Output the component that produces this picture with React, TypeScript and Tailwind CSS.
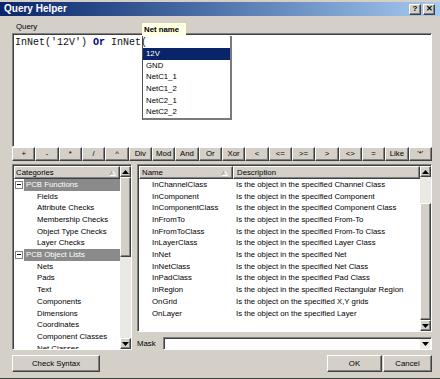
const OPERATORS = ['+', '-', '*', '/', '^', 'Div', 'Mod', 'And', 'Or', 'Xor', '<', '<=', '>=', '>', '<>', '=', 'Like', "'*'"];

const NETS = ['12V', 'GND', 'NetC1_1', 'NetC1_2', 'NetC2_1', 'NetC2_2'];

const CATEGORIES = [
  { label: 'PCB Functions', group: true },
  { label: 'Fields' },
  { label: 'Attribute Checks' },
  { label: 'Membership Checks' },
  { label: 'Object Type Checks' },
  { label: 'Layer Checks' },
  { label: 'PCB Object Lists', group: true },
  { label: 'Nets' },
  { label: 'Pads' },
  { label: 'Text' },
  { label: 'Components' },
  { label: 'Dimensions' },
  { label: 'Coordinates' },
  { label: 'Component Classes' },
  { label: 'Net Classes' },
];

const FUNCTIONS = [
  ['InChannelClass', 'Is the object in the specified Channel Class'],
  ['InComponent', 'Is the object in the specified Component'],
  ['InComponentClass', 'Is the object in the specified Component Class'],
  ['InFromTo', 'Is the object in the specified From-To'],
  ['InFromToClass', 'Is the object in the specified From-To Class'],
  ['InLayerClass', 'Is the object in the specified Layer Class'],
  ['InNet', 'Is the object in the specified Net'],
  ['InNetClass', 'Is the object in the specified Net Class'],
  ['InPadClass', 'Is the object in the specified Pad Class'],
  ['InRegion', 'Is the object in the specified Rectangular Region'],
  ['OnGrid', 'Is the object on the specified X,Y grids'],
  ['OnLayer', 'Is the object on the specified Layer'],
];

const raised =
  'border border-t-white border-l-white border-r-[#404040] border-b-[#404040] shadow-[inset_-1px_-1px_0_#808080]';
const sunken =
  'border border-t-[#808080] border-l-[#808080] border-r-white border-b-white shadow-[inset_1px_1px_0_#404040]';

function Arrow({ down }: { down?: boolean }) {
  return (
    <svg width="7" height="4" viewBox="0 0 7 4">
      <path d={down ? 'M0 0h7L3.5 4z' : 'M0 4h7L3.5 0z'} fill="#000" />
    </svg>
  );
}

function ArrowButton({ down }: { down?: boolean }) {
  return (
    <div className={`flex h-[11px] w-[11px] shrink-0 items-center justify-center bg-[#d4d0c8] ${raised}`}>
      <Arrow down={down} />
    </div>
  );
}

function SortMark() {
  return (
    <svg width="7" height="6" viewBox="0 0 7 6">
      <path d="M0.5 5.5L3.5 0.5" stroke="#9a9a9a" fill="none" />
      <path d="M3.5 0.5L6.5 5.5H0.5" stroke="#ffffff" fill="none" />
    </svg>
  );
}

function ScrollBar({ beforeClass, thumbClass }: { beforeClass: string; thumbClass: string }) {
  return (
    <div className="flex w-[11px] shrink-0 flex-col bg-[#ebe9e4]">
      <ArrowButton />
      <div className={beforeClass} />
      <div className={`bg-[#d4d0c8] ${raised} ${thumbClass}`} />
      <div className="flex-1" />
      <ArrowButton down />
    </div>
  );
}

export default function App() {
  return (
    <div className="flex h-[379px] w-[440px] flex-col overflow-hidden border-b border-b-[#404040] bg-[#d4d0c8] pt-[2px] font-['Liberation_Sans',Arial,sans-serif] text-[7.8px] leading-none text-black">
      {/* title bar */}
      <div className="flex h-[14px] shrink-0 items-center bg-linear-to-r from-[#0a246a] to-[#a6caf0] pl-[4px] pr-[5px]">
        <span className="text-[10px] font-bold text-white">Query Helper</span>
        <div className="flex-1" />
        <div className={`mr-[2px] flex h-[11px] w-[12px] items-center justify-center bg-[#d4d0c8] text-[8px] font-bold ${raised}`}>
          ?
        </div>
        <div className={`flex h-[11px] w-[12px] items-center justify-center bg-[#d4d0c8] text-[8px] font-bold ${raised}`}>
          ✕
        </div>
      </div>

      <div className="flex flex-1 flex-col pl-[12px] pr-[8px]">
        <div className="h-[17px] pl-[4px] pt-[6px] leading-[10px]">Query</div>

        {/* query editor */}
        <div className={`relative h-[114px] bg-white ${sunken}`}>
          <div className="relative z-20 pl-[2px] pt-[3px] font-['Liberation_Mono',monospace] text-[10px] leading-[12px] text-[#111]">
            InNet('12V') <span className="font-bold text-[#000080]">Or</span> InNet(
          </div>

          <div className="absolute left-[129px] top-[-11px] z-10 flex h-[13px] w-[44px] items-center bg-[#ffffe1] pl-[2px] font-bold">
            Net name
          </div>

          <div className="absolute left-[129px] top-[2px] z-10 w-[90px] border-b-2 border-l border-r-2 border-b-[#7a7a7a] border-l-[#505050] border-r-[#7a7a7a] bg-white">
            <div className="h-[12px]" />
            {NETS.map((net, i) => (
              <div
                key={net}
                className={`flex h-[11.7px] items-center pl-[3px] ${i === 0 ? 'bg-[#0a246a] text-white' : ''}`}
              >
                {net}
              </div>
            ))}
          </div>
        </div>

        {/* operator buttons */}
        <div className="flex h-[14px]">
          {OPERATORS.map((op) => (
            <div key={op} className={`flex flex-1 items-center justify-center bg-[#d4d0c8] ${raised}`}>
              {op}
            </div>
          ))}
        </div>

        {/* lists */}
        <div className="mt-[3px] flex h-[186px] gap-[5px]">
          <div className={`flex w-[120px] bg-white pl-[1px] pt-[1px] ${sunken}`}>
            <div className="flex min-w-0 flex-1 flex-col overflow-hidden">
              <div className={`flex h-[13px] shrink-0 items-center bg-[#d4d0c8] pl-[1px] pr-[3px] ${raised}`}>
                <span className="flex-1">Categories</span>
                <SortMark />
              </div>
              {CATEGORIES.map((c) =>
                c.group ? (
                  <div key={c.label} className="flex h-[11.7px] shrink-0 items-center pl-[1px]">
                    <div className="flex h-[8px] w-[8px] items-center justify-center border border-[#808080] bg-white">
                      <div className="h-px w-[4px] bg-black" />
                    </div>
                    <div className="ml-[1px] flex h-full flex-1 items-center bg-[#8a8a8a] pl-[2px] text-white">
                      {c.label}
                    </div>
                  </div>
                ) : (
                  <div key={c.label} className="flex h-[11.7px] shrink-0 items-center whitespace-nowrap pl-[23px]">
                    {c.label}
                  </div>
                )
              )}
            </div>
            <ScrollBar beforeClass="h-0" thumbClass="h-[80px]" />
          </div>

          <div className="flex flex-1 flex-col">
            <div className={`flex h-[169px] bg-white pl-[1px] pt-[1px] ${sunken}`}>
              <div className="flex min-w-0 flex-1 flex-col overflow-hidden">
                <div className="flex h-[13px] shrink-0">
                  <div className={`flex w-[94px] items-center bg-[#d4d0c8] pl-[2px] pr-[4px] ${raised}`}>
                    <span className="flex-1">Name</span>
                    <SortMark />
                  </div>
                  <div className={`flex flex-1 items-center bg-[#d4d0c8] pl-[3px] ${raised}`}>Description</div>
                </div>
                {FUNCTIONS.map(([name, desc]) => (
                  <div key={name} className="flex h-[11.7px] shrink-0 items-center whitespace-nowrap">
                    <div className="w-[94px] pl-[13px]">{name}</div>
                    <div className="pl-[3px]">{desc}</div>
                  </div>
                ))}
              </div>
              <ScrollBar beforeClass="h-[26px]" thumbClass="h-[117px]" />
            </div>

            <div className="mt-[5px] flex h-[13px] items-center">
              <span className="w-[26px]">Mask</span>
              <div className={`flex h-full flex-1 justify-end bg-white pr-px pt-px ${sunken}`}>
                <div className="flex h-[10px] w-[10px] items-center justify-center bg-[#ecebe6]">
                  <Arrow down />
                </div>
              </div>
            </div>
          </div>
        </div>

        {/* footer buttons */}
        <div className="mt-[5px] flex h-[17px]">
          <div className={`flex w-[88px] items-center justify-center bg-[#d4d0c8] ${raised}`}>Check Syntax</div>
          <div className="flex-1" />
          <div className={`flex w-[55px] items-center justify-center bg-[#d4d0c8] ${raised}`}>OK</div>
          <div className={`ml-[1px] flex w-[49px] items-center justify-center bg-[#d4d0c8] ${raised}`}>Cancel</div>
        </div>
      </div>
    </div>
  );
}
